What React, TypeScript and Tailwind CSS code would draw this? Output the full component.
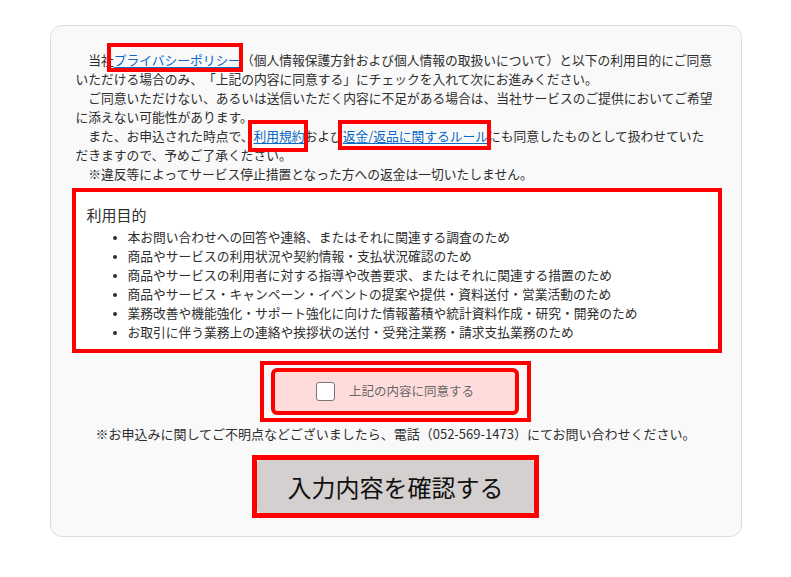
import { useState } from 'react';

const purposes = [
  '本お問い合わせへの回答や連絡、またはそれに関連する調査のため',
  '商品やサービスの利用状況や契約情報・支払状況確認のため',
  '商品やサービスの利用者に対する指導や改善要求、またはそれに関連する措置のため',
  '商品やサービス・キャンペーン・イベントの提案や提供・資料送付・営業活動のため',
  '業務改善や機能強化・サポート強化に向けた情報蓄積や統計資料作成・研究・開発のため',
  'お取引に伴う業務上の連絡や挨拶状の送付・受発注業務・請求支払業務のため',
];

// red annotation frame drawn over an inline link
const Marked = ({ children, frame }: { children: string; frame: string }) => (
  <span className="relative">
    <a href="#" className="text-[#0a68c8] underline underline-offset-2">
      {children}
    </a>
    <span className={`pointer-events-none absolute border-4 border-[#ff0000] ${frame}`} />
  </span>
);

export default function App() {
  const [agreed, setAgreed] = useState(false);

  return (
    <div className="min-h-screen bg-white pt-[25px] font-['Noto_Sans_CJK_JP','Noto_Sans',sans-serif] text-[#2e2e2e]">
      <div className="mx-auto w-[692px] rounded-xl border border-[#dcdcdc] bg-[#f9f9f9] px-[25px] pt-[24px] pb-[18px]">
        <div className="w-[639px] text-[12.75px] leading-[19px] [text-spacing-trim:space-all]">
          <p className="indent-[1em]">
            当社
            <Marked frame="-left-[7px] -right-[2px] -top-[7px] -bottom-[3px]">プライバシーポリシー</Marked>
            （個人情報保護方針および個人情報の取扱いについて）と以下の利用目的にご同意いただける場合のみ、「上記の内容に同意する」にチェックを入れて次にお進みください。
          </p>
          <p className="indent-[1em]">
            ご同意いただけない、あるいは送信いただく内容に不足がある場合は、当社サービスのご提供においてご希望に添えない可能性があります。
          </p>
          <p className="indent-[1em]">
            また、お申込された時点で、
            <Marked frame="-left-[6px] -right-[3px] -top-[6px] -bottom-[7px]">利用規約</Marked>
            および
            <Marked frame="-left-[5px] -right-[3px] -top-[6px] -bottom-[5px]">返金/返品に関するルール</Marked>
            にも同意したものとして扱わせていただきますので、予めご了承ください。
          </p>
          <p className="indent-[1em]">※違反等によってサービス停止措置となった方への返金は一切いたしません。</p>
        </div>

        <div className="mt-[5px] -ml-[4px] w-[650px] border-4 border-[#ff0000] bg-white px-[11px] pt-[12px] pb-[8px]">
          <h3 className="text-[15px] leading-[22px]">利用目的</h3>
          <ul className="mt-[1px] list-disc pl-[41px] text-[12.75px] leading-[19px] marker:text-[10px]">
            {purposes.map((p) => (
              <li key={p}>{p}</li>
            ))}
          </ul>
        </div>

        <div className="mt-[8px] flex justify-center">
          <div className="border-4 border-[#ff0000] py-[3px] pr-[8px] pl-[7px]">
            <label className="flex h-[47px] w-[248px] cursor-pointer items-center justify-center gap-[14px] rounded-md border-4 border-[#ff0000] bg-[#ffdcdc]">
              <input
                type="checkbox"
                checked={agreed}
                onChange={(e) => setAgreed(e.target.checked)}
                className="h-[19px] w-[19px] appearance-none rounded-[3px] border border-[#777] bg-white checked:bg-[#0a68c8]"
              />
              <span className="text-[12.5px] text-[#666]">上記の内容に同意する</span>
            </label>
          </div>
        </div>

        <p className="mt-[2px] text-center text-[13px] leading-[19px]">
          ※お申込みに関してご不明点などございましたら、電話（052-569-1473）にてお問い合わせください。
        </p>

        <div className="mt-[12px] flex justify-center">
          <div className="border-[5px] border-[#ff0000]">
            <button className="h-[53px] w-[277px] rounded bg-[#d4d0cf] text-[24px] text-[#111]">
              入力内容を確認する
            </button>
          </div>
        </div>
      </div>
    </div>
  );
}
